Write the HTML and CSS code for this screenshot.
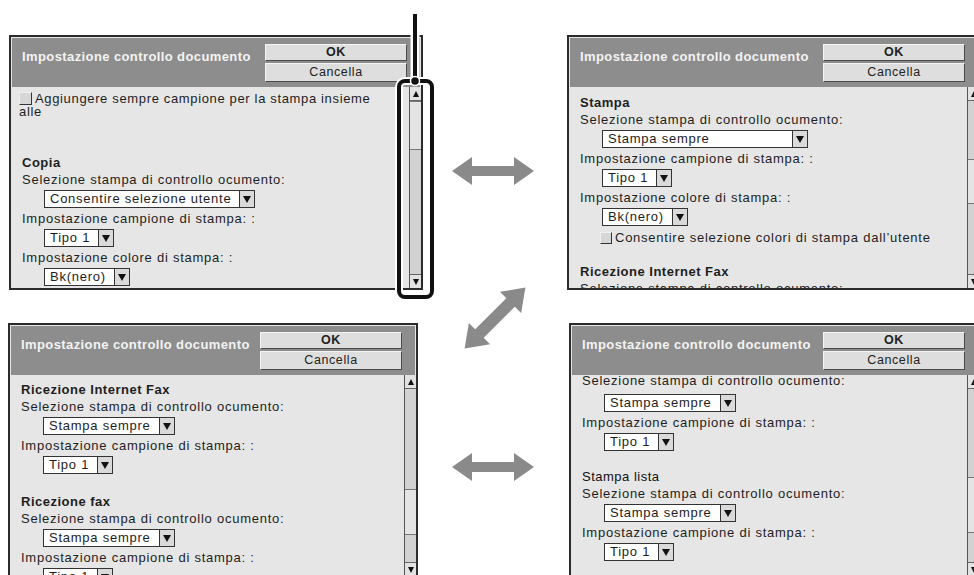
FILE: index.html
```html
<!DOCTYPE html>
<html lang="it">
<head>
  <meta charset="UTF-8" />
  <title>Impostazione controllo documento</title>
  <meta name="viewport" content="width=device-width, initial-scale=1.0">
  <link rel="stylesheet" href="styles.css">
</head>
<body>
<div class="figure">

  <!-- schermata 1: inizio elenco -->
  <section class="panel p1">
    <div class="head">
      <span class="title">Impostazione controllo documento</span>
      <div class="buttons">
        <div class="btn ok">OK</div>
        <div class="btn cancel">Cancella</div>
      </div>
    </div>
    <div class="body">
      <div class="scroll">
        <div class="check-para"><span class="box"></span>Aggiungere sempre campione per la stampa insieme<br>alle</div>
        <div class="sec first-sec">Copia</div>
        <div class="lbl">Selezione stampa di controllo ocumento:</div>
        <div class="row"><span class="select"><span class="val">Consentire selezione utente</span><span class="arr"></span></span></div>
        <div class="lbl">Impostazione campione di stampa: :</div>
        <div class="row"><span class="select"><span class="val">Tipo 1</span><span class="arr"></span></span></div>
        <div class="lbl">Impostazione colore di stampa: :</div>
        <div class="row"><span class="select"><span class="val">Bk(nero)</span><span class="arr"></span></span></div>
      </div>
      <div class="sbar">
        <div class="sb-up"></div>
        <div class="sb-track"><div class="sb-thumb" style="margin-top:0;height:49px"></div></div>
        <div class="sb-down"></div>
      </div>
    </div>
    <svg class="callout" width="44" height="294" viewBox="0 0 44 294">
      <line x1="22" y1="3" x2="22" y2="70" stroke="#fff" stroke-width="9"/>
      <rect x="6" y="71" width="33" height="216" rx="6" fill="none" stroke="#fff" stroke-width="8"/>
      <line x1="22" y1="4" x2="22" y2="70" stroke="#111" stroke-width="4"/>
      <rect x="6" y="71" width="33" height="216" rx="6" fill="none" stroke="#111" stroke-width="4"/>
      <circle cx="22" cy="71" r="4.5" fill="#111" stroke="#fff" stroke-width="1.5"/>
    </svg>
  </section>

  <div class="arrows">
    <svg class="arrow-h" width="82" height="28" viewBox="0 0 82 28">
      <polygon points="0,14 20,0 20,9 62,9 62,0 82,14 62,28 62,19 20,19 20,28" fill="#8a8a8a"/>
    </svg>
    <svg class="arrow-d" width="72" height="72" viewBox="0 0 72 72">
      <polygon transform="translate(36 36) rotate(-45)" points="-43,0 -22,-15 -22,-6 22,-6 22,-15 43,0 22,15 22,6 -22,6 -22,15" fill="#8a8a8a"/>
    </svg>
    <svg class="arrow-h low" width="82" height="28" viewBox="0 0 82 28">
      <polygon points="0,14 20,0 20,9 62,9 62,0 82,14 62,28 62,19 20,19 20,28" fill="#8a8a8a"/>
    </svg>
  </div>

  <!-- schermata 2: Stampa -->
  <section class="panel p2">
    <div class="head">
      <span class="title">Impostazione controllo documento</span>
      <div class="buttons">
        <div class="btn ok">OK</div>
        <div class="btn cancel">Cancella</div>
      </div>
    </div>
    <div class="body">
      <div class="scroll">
        <div class="sec top-sec">Stampa</div>
        <div class="lbl">Selezione stampa di controllo ocumento:</div>
        <div class="row"><span class="select wide"><span class="val">Stampa sempre</span><span class="arr"></span></span></div>
        <div class="lbl">Impostazione campione di stampa: :</div>
        <div class="row"><span class="select"><span class="val">Tipo 1</span><span class="arr"></span></span></div>
        <div class="lbl">Impostazione colore di stampa: :</div>
        <div class="row"><span class="select"><span class="val">Bk(nero)</span><span class="arr"></span></span></div>
        <div class="check-row"><span class="box"></span>Consentire selezione colori di stampa dall’utente</div>
        <div class="sec gap-sec">Ricezione Internet Fax</div>
        <div class="lbl">Selezione stampa di controllo ocumento:</div>
        <div class="row"><span class="select"><span class="val">Stampa sempre</span><span class="arr"></span></span></div>
      </div>
      <div class="sbar">
        <div class="sb-up"></div>
        <div class="sb-track"><div class="sb-thumb" style="margin-top:58px;height:45px"></div></div>
        <div class="sb-down"></div>
      </div>
    </div>
  </section>

  <!-- schermata 3: Ricezione -->
  <section class="panel p3">
    <div class="head">
      <span class="title">Impostazione controllo documento</span>
      <div class="buttons">
        <div class="btn ok">OK</div>
        <div class="btn cancel">Cancella</div>
      </div>
    </div>
    <div class="body">
      <div class="scroll">
        <div class="sec top-sec3">Ricezione Internet Fax</div>
        <div class="lbl">Selezione stampa di controllo ocumento:</div>
        <div class="row"><span class="select"><span class="val">Stampa sempre</span><span class="arr"></span></span></div>
        <div class="lbl">Impostazione campione di stampa: :</div>
        <div class="row"><span class="select"><span class="val">Tipo 1</span><span class="arr"></span></span></div>
        <div class="sec gap-sec">Ricezione fax</div>
        <div class="lbl">Selezione stampa di controllo ocumento:</div>
        <div class="row"><span class="select"><span class="val">Stampa sempre</span><span class="arr"></span></span></div>
        <div class="lbl">Impostazione campione di stampa: :</div>
        <div class="row"><span class="select"><span class="val">Tipo 1</span><span class="arr"></span></span></div>
      </div>
      <div class="sbar">
        <div class="sb-up"></div>
        <div class="sb-track"><div class="sb-thumb" style="margin-top:100px;height:46px"></div></div>
        <div class="sb-down"></div>
      </div>
    </div>
  </section>

  <!-- schermata 4: Stampa lista -->
  <section class="panel p4">
    <div class="head">
      <span class="title">Impostazione controllo documento</span>
      <div class="buttons">
        <div class="btn ok">OK</div>
        <div class="btn cancel">Cancella</div>
      </div>
    </div>
    <div class="body">
      <div class="scroll">
        <div class="lbl cut">Selezione stampa di controllo ocumento:</div>
        <div class="row"><span class="select"><span class="val">Stampa sempre</span><span class="arr"></span></span></div>
        <div class="lbl">Impostazione campione di stampa: :</div>
        <div class="row"><span class="select"><span class="val">Tipo 1</span><span class="arr"></span></span></div>
        <div class="sec gap-sec plain">Stampa lista</div>
        <div class="lbl">Selezione stampa di controllo ocumento:</div>
        <div class="row"><span class="select"><span class="val">Stampa sempre</span><span class="arr"></span></span></div>
        <div class="lbl">Impostazione campione di stampa: :</div>
        <div class="row"><span class="select"><span class="val">Tipo 1</span><span class="arr"></span></span></div>
      </div>
      <div class="sbar">
        <div class="sb-up"></div>
        <div class="sb-track"><div class="sb-thumb" style="margin-top:88px;height:56px"></div></div>
        <div class="sb-down"></div>
      </div>
    </div>
  </section>

</div>
</body>
</html>
```

FILE: styles.css
```css
html, body {
  margin: 0;
  height: 575px;
  overflow: hidden;
  background: #fff;
}
body {
  font-family: "Liberation Sans", Arial, sans-serif;
  color: #1e1e1e;
}
.figure {
  display: grid;
  grid-template-columns: 414px 144px 414px;
  grid-template-rows: 255px 255px;
  row-gap: 33px;
  padding: 35px 0 0 9px;
  width: max-content;
}

/* pannello */
.panel {
  position: relative;
  display: flex;
  flex-direction: column;
  border: 2px solid #2b2b2b;
  background: #e6e6e6;
  min-height: 0;
}
.p1 { grid-column: 1; grid-row: 1; }
.p2 { grid-column: 3; grid-row: 1; }
.p3 { grid-column: 1; grid-row: 2; width: 406px; margin-left: -1px; }
.p4 { grid-column: 3; grid-row: 2; margin-left: 2px; }

.head {
  margin: 1px 1px 0;
  height: 49px;
  background: #8d8d8d;
  display: flex;
  justify-content: space-between;
  padding: 0 13px 0 10px;
}
.title {
  color: #f3f3f3;
  font-weight: bold;
  font-size: 13px;
  line-height: 15px;
  letter-spacing: 0.4px;
  padding-top: 11px;
}
.buttons {
  width: 142px;
  padding-top: 6px;
  display: flex;
  flex-direction: column;
  gap: 2px;
}
.btn {
  box-sizing: border-box;
  background: #dedede;
  border: 1px solid;
  border-color: #f5f5f5 #4a4a4a #4a4a4a #f5f5f5;
  text-align: center;
  font-size: 12.5px;
  letter-spacing: 0.6px;
  color: #222;
}
.btn.ok {
  height: 17px;
  line-height: 15px;
  font-weight: bold;
}
.btn.cancel {
  height: 19px;
  line-height: 17px;
}

/* area contenuto */
.body {
  flex: 1;
  display: flex;
  min-height: 0;
  overflow: hidden;
}
.scroll {
  flex: 1;
  padding-left: 11px;
  overflow: hidden;
  font-size: 13px;
  letter-spacing: 0.75px;
}
.sec {
  font-weight: bold;
  line-height: 15px;
  letter-spacing: 0.5px;
}
.sec.plain {
  font-weight: normal;
  color: #111;
}
.first-sec { margin-top: 37px; }
.top-sec { margin-top: 8px; }
.top-sec3 { margin-top: 7px; }
.gap-sec { margin-top: 16px; }
.p3 .gap-sec { margin-top: 19px; }
.p4 .gap-sec { margin-top: 17px; }
.lbl {
  line-height: 19px;
  white-space: nowrap;
}
.lbl.cut { margin-top: -4px; margin-bottom: 3px; }
.row {
  height: 20px;
  padding-left: 22px;
  padding-top: 1px;
  box-sizing: border-box;
}
.select {
  display: inline-flex;
  height: 18px;
  box-sizing: border-box;
  border: 1px solid #333;
  background: #fff;
  vertical-align: top;
}
.select .val {
  padding: 0 8px 0 5px;
  line-height: 16px;
  flex: 1;
  white-space: nowrap;
}
.select.wide { width: 206px; }
.select .arr {
  width: 14px;
  border-left: 1px solid #333;
  background: #dadada;
  display: flex;
  align-items: center;
  justify-content: center;
}
.select .arr::after {
  content: "";
  border-left: 4px solid transparent;
  border-right: 4px solid transparent;
  border-top: 7px solid #111;
}

.box {
  display: inline-block;
  width: 13px;
  height: 13px;
  box-sizing: border-box;
  background: #d6d6d6;
  border: 1px solid;
  border-color: #efefef #333 #333 #efefef;
  vertical-align: -2px;
  margin-right: 3px;
}
.check-para {
  padding-top: 5px;
  margin-left: -3px;
  line-height: 13px;
  letter-spacing: 0.65px;
}
.check-row {
  height: 20px;
  line-height: 20px;
  padding-left: 20px;
  margin-top: 1px;
  white-space: nowrap;
}
.check-row .box {
  width: 12px;
  height: 12px;
}

/* barra di scorrimento */
.sbar {
  width: 12px;
  box-sizing: border-box;
  border-left: 1px solid #555;
  background: #d2d2d2;
  display: flex;
  flex-direction: column;
}
.sb-up, .sb-down {
  height: 13px;
  flex: none;
  background: #e2e2e2;
  display: flex;
  align-items: center;
  justify-content: center;
}
.sb-up { border-bottom: 1px solid #666; }
.sb-down { border-top: 1px solid #666; }
.sb-up::after {
  content: "";
  border-left: 3.5px solid transparent;
  border-right: 3.5px solid transparent;
  border-bottom: 6px solid #111;
}
.sb-down::after {
  content: "";
  border-left: 3.5px solid transparent;
  border-right: 3.5px solid transparent;
  border-top: 6px solid #111;
}
.sb-track {
  flex: 1;
  min-height: 0;
}
.sb-thumb {
  background: #e4e4e4;
  border-bottom: 1px solid #777;
  border-top: 1px solid #777;
  box-sizing: border-box;
}

/* richiamo sulla barra */
.callout {
  position: absolute;
  left: 382px;
  top: -27px;
  overflow: visible;
}

/* frecce */
.arrows {
  grid-column: 2;
  grid-row: 1 / span 2;
  display: flex;
  flex-direction: column;
  align-items: center;
  padding-top: 122px;
}
.arrow-h { margin-right: 5px; flex: none; }
.arrow-d { margin-top: 97px; flex: none; }
.arrow-h.low { margin-top: 99px; }
```
